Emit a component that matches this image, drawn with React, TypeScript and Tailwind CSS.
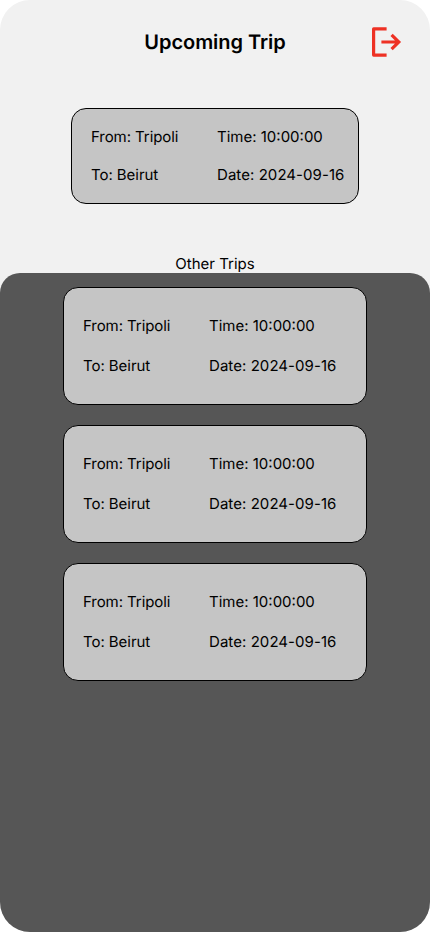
type Trip = { from: string; to: string; time: string; date: string };

const trip: Trip = { from: "Tripoli", to: "Beirut", time: "10:00:00", date: "2024-09-16" };

function TripCard({ trip, className }: { trip: Trip; className: string }) {
  return (
    <article className={`grid grid-cols-[126px_auto] justify-start border border-black bg-[#c5c5c5] pl-[19px] text-[15px] whitespace-nowrap ${className}`}>
      <p className="tracking-[-0.07px]">From: {trip.from}</p>
      <p>Time: {trip.time}</p>
      <p className="tracking-[-0.05px]">To: {trip.to}</p>
      <p className="tracking-[0.06px]">Date: {trip.date}</p>
    </article>
  );
}

export default function App() {
  return (
    <main className="flex h-[932px] w-[430px] flex-col overflow-hidden rounded-[30px] bg-[#f1f1f1] font-['Inter',sans-serif] text-black [text-rendering:geometricPrecision]">
      <header className="grid h-[84px] shrink-0 grid-cols-[1fr_auto_1fr] items-center">
        <span />
        <h1 className="text-[20px] leading-6 font-semibold tracking-[-0.05px]">Upcoming Trip</h1>
        <button aria-label="Log out" className="mr-[26px] justify-self-end">
          <svg width="34" height="34" viewBox="0 0 34 34" fill="none" stroke="#ee3124" strokeWidth="3.2">
            <path strokeLinejoin="round" d="M16.6 3.9H3.6v26.2h13" />
            <path d="M11.4 17h17.4M21.6 9.8l7.2 7.2-7.2 7.2" />
          </svg>
        </button>
      </header>
      <TripCard trip={trip} className="mx-auto mt-6 h-24 w-72 shrink-0 grid-rows-[38px_38px] rounded-[15px] pt-[18px] leading-5" />
      <h2 className="mt-[51px] h-[18px] shrink-0 text-center text-[15px] leading-[18px]">Other Trips</h2>
      <section className="flex grow flex-col items-center gap-5 rounded-t-[20px] bg-[#565656] pt-[14px]">
        <TripCard trip={trip} className="h-[118px] w-[304px] grid-rows-[40px_40px] rounded-[15px] pt-[28px] leading-5" />
        <TripCard trip={trip} className="h-[118px] w-[304px] grid-rows-[40px_40px] rounded-[15px] pt-[28px] leading-5" />
        <TripCard trip={trip} className="h-[118px] w-[304px] grid-rows-[40px_40px] rounded-[15px] pt-[28px] leading-5" />
      </section>
    </main>
  );
}
